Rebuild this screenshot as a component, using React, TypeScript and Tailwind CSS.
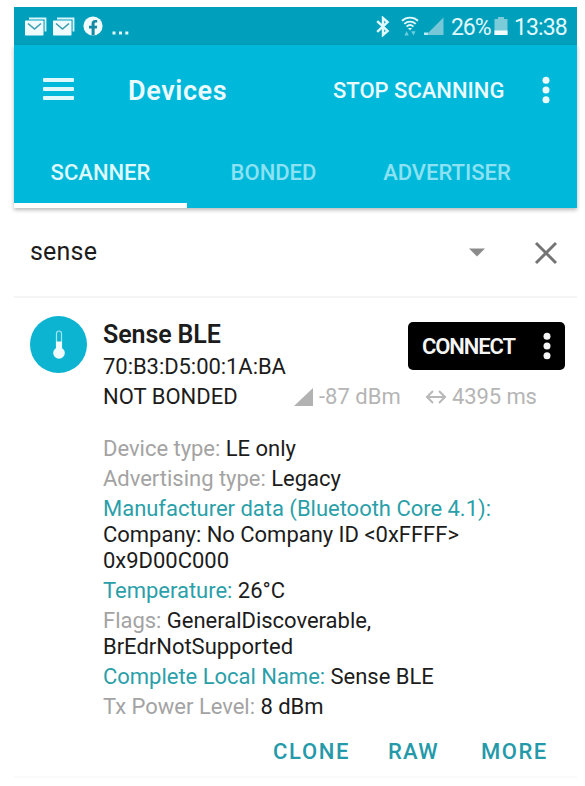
import type { ReactNode } from 'react';

function MailIcon() {
  return (
    <svg width="22" height="19" viewBox="0 0 22 19">
      <path d="M4 1.5H20.5V14.5" fill="none" stroke="#d9f5fa" strokeWidth="1.8" />
      <rect x="0" y="3.5" width="18.5" height="15" rx="0.8" fill="#effbfd" />
      <path d="M3 6.5 9.5 12 16 6.5" fill="none" stroke="#3d9db2" strokeWidth="1.6" />
    </svg>
  );
}

function Dots() {
  return (
    <svg width="8" height="28" viewBox="0 0 8 28" fill="currentColor">
      <circle cx="4" cy="4.3" r="3.5" />
      <circle cx="4" cy="14" r="3.5" />
      <circle cx="4" cy="23.7" r="3.5" />
    </svg>
  );
}

function StatusBar() {
  return (
    <div className="flex h-[38px] items-center bg-[#00a0bd] pl-[11px] text-[#e2f9fc]">
      <MailIcon />
      <span className="w-[6px]" />
      <MailIcon />
      <svg width="20" height="20" viewBox="0 0 20 20" className="ml-[8px]">
        <circle cx="10" cy="10" r="9.6" fill="#effbfd" />
        <path d="M8.6 19.2V12.6H6V9.8H8.6V7.8C8.6 5.2 10 4 12.2 4H14.2V6.6H13C11.9 6.6 11.6 7.1 11.6 8V9.8H14.2L13.8 12.6H11.6V19.2Z" fill="#1588a4" />
      </svg>
      <svg width="18" height="6" viewBox="0 0 18 6" className="ml-[9px] mt-[14px]" fill="#e2f9fc">
        <rect x="0.5" y="1.5" width="3" height="3" />
        <rect x="7" y="1.5" width="3" height="3" />
        <rect x="13.3" y="1.5" width="3" height="3" />
      </svg>
      <svg width="14" height="21" viewBox="0 0 14 21" className="ml-[246px]" fill="none" stroke="currentColor" strokeWidth="2.4">
        <path d="M1.2 5.2 11.6 15 7 19V2L11.6 6 1.2 15.8" />
      </svg>
      <svg width="18" height="20" viewBox="0 0 18 20" className="ml-[11px]" fill="none" stroke="currentColor" strokeWidth="1.9">
        <path d="M1 4.8C5.5.6 12.5.6 17 4.8M3.3 7.9c3.3-3 8.1-3 11.4 0M5.6 10.6c2-1.8 4.8-1.8 6.8 0" />
        <path d="M7 12h4L9 14.4Z" fill="currentColor" stroke="none" />
        <path d="M3.4 19.4 5.6 15l2.2 4.4ZM10.2 15.2h4.4l-2.2 4.4Z" fill="#6bcddd" stroke="none" />
      </svg>
      <svg width="20" height="19" viewBox="0 0 20 19" className="ml-[5px]">
        <path d="M19.5 .5V18H2Z" fill="#76c8d8" />
        <path d="M0 18v-2.5h4V18Z" fill="#b8eaf2" />
      </svg>
      <span className="ml-[7px] mt-[3px] w-[41px] whitespace-nowrap text-[23px] leading-none tracking-[-1.1px]">26%</span>
      <svg width="14" height="20" viewBox="0 0 14 20" className="ml-[2px]">
        <path d="M4 1h6v2h3.5v16H.5V3H4Z" fill="#7bcbd9" />
        <path d="M.5 14.5h13V19H.5Z" fill="#f4fdfe" />
      </svg>
      <span className="ml-[6px] mt-[3px] whitespace-nowrap text-[23px] leading-none tracking-[-0.9px]">13:38</span>
    </div>
  );
}

function Line({ label, teal, children }: { label: string; teal?: boolean; children?: ReactNode }) {
  return (
    <div className="whitespace-nowrap pb-1">
      <span className={teal ? 'text-[#2b9fa9]' : 'text-[#a3a3a3]'}>{label}</span> {children}
    </div>
  );
}

export default function App() {
  return (
    <div className="h-[786px] w-[585px] overflow-hidden bg-white pl-[14px] pt-[7px] font-[Roboto,sans-serif] text-[#1c1c1c]">
      <div className="h-[771px] w-[563px] border-b-2 border-[#fafafa]">
        <StatusBar />
        <header className="relative h-[163px] bg-[#00b8da] shadow-[0_2px_4px_rgba(0,0,0,0.28)]">
          <div className="flex h-[90px] items-center pl-[29px] text-[#eafafd]">
            <div className="mt-[-2px] flex w-[31px] flex-col gap-[5px]">
              <i className="h-[4px] rounded-[1px] bg-[#dff8fc]" />
              <i className="h-[4px] rounded-[1px] bg-[#dff8fc]" />
              <i className="h-[4px] rounded-[1px] bg-[#dff8fc]" />
            </div>
            <h1 className="ml-[54px] mt-[3px] w-[205px] text-[27px] font-semibold tracking-[0.6px]">Devices</h1>
            <button className="mt-px w-[209px] whitespace-nowrap text-left text-[22px] font-medium">STOP SCANNING</button>
            <Dots />
          </div>
          <nav className="flex h-[73px] text-[22px] font-medium text-[#8ce2f2]">
            <div className="flex w-[173px] items-center justify-center border-b-[5px] border-white pt-[7px]">
              <span className="text-[#dff8fc]">SCANNER</span>
            </div>
            <div className="flex w-[173px] items-center justify-center pt-[2px]">BONDED</div>
            <div className="flex w-[174px] items-center justify-center pt-[2px]">ADVERTISER</div>
          </nav>
        </header>
        <div className="flex h-[90px] items-center border-b-2 border-[#f5f5f5] pl-4">
          <span className="w-[439px] text-[25px] tracking-[0.2px]">sense</span>
          <svg width="16" height="9" viewBox="0 0 16 9"><path d="M0 .5h16L8 8.5Z" fill="#8b8b8b" /></svg>
          <svg width="24" height="24" viewBox="0 0 24 24" className="ml-[49px] mt-px" stroke="#747474" strokeWidth="2.9"><path d="m2 2 20 20M22 2 2 22" /></svg>
        </div>
        <section className="flex pl-4 pt-[18px]">
          <div className="flex h-[57px] w-[57px] shrink-0 items-center justify-center rounded-full bg-[#0cb4d1]">
            <svg width="14" height="30" viewBox="0 0 14 30">
              <path d="M4.5 19V3.5a2.5 2.5 0 0 1 5 0V19" fill="none" stroke="#a5e6f0" strokeWidth="1.2" />
              <path d="M4 11.5h6v8H4Z" fill="#effbfd" />
              <circle cx="7" cy="23" r="5.8" fill="#effbfd" />
            </svg>
          </div>
          <div className="ml-4 min-w-0 flex-1">
            <div className="flex h-[61px] justify-between pr-[12px] pt-[7px]">
              <div>
                <h2 className="-mt-[4px] h-8 whitespace-nowrap text-[25px] font-semibold leading-[31px] tracking-[-0.1px]">Sense BLE</h2>
                <div className="h-8 whitespace-nowrap text-[22px] leading-8 tracking-[-0.05px]">70:B3:D5:00:1A:BA</div>
              </div>
              <div className="-mt-px flex h-[48px] w-[157px] items-center rounded-[5px] bg-black pl-[14px] text-[#f5f5f5]">
                <span className="w-[121px] text-[22px] font-semibold tracking-[-1.1px]">CONNECT</span>
                <Dots />
              </div>
            </div>
            <div className="flex h-8 items-center whitespace-nowrap pt-2 text-[22px] leading-8">
              <span className="w-[191px]">NOT BONDED</span>
              <svg width="19" height="18" viewBox="0 0 19 18"><path d="M19 0v18H0Z" fill="#b2b2b2" /></svg>
              <span className="ml-[6px] w-[106px] text-[#b5b5b5]">-87 dBm</span>
              <svg width="22" height="16" viewBox="0 0 22 16" fill="none" stroke="#b8b8b8" strokeWidth="2"><path d="M2 8h18M8 2 2 8l6 6M14 2l6 6-6 6" /></svg>
              <span className="ml-[5px] tracking-[-0.1px] text-[#b5b5b5]">4395 ms</span>
            </div>
            <div className="pt-[27px] text-[22px] leading-[26px] tracking-[-0.02px]">
              <Line label="Device type:">LE only</Line>
              <Line label="Advertising type:">Legacy</Line>
              <Line label="Manufacturer data (Bluetooth Core 4.1):" teal><br />Company: No Company ID &lt;0xFFFF&gt;<br />0x9D00C000</Line>
              <Line label="Temperature:" teal>26°C</Line>
              <Line label="Flags:">GeneralDiscoverable,<br />BrEdrNotSupported</Line>
              <Line label="Complete Local Name:" teal>Sense BLE</Line>
              <Line label="Tx Power Level:">8 dBm</Line>
            </div>
            <div className="flex pl-[170px] pt-[13px] text-[22px] font-medium leading-[30px] tracking-[1.7px] text-[#2499a9]">
              <span className="w-[115px]">CLONE</span>
              <span className="w-[93px] tracking-[1.2px]">RAW</span>
              <span className="tracking-[1.5px]">MORE</span>
            </div>
          </div>
        </section>
      </div>
    </div>
  );
}
